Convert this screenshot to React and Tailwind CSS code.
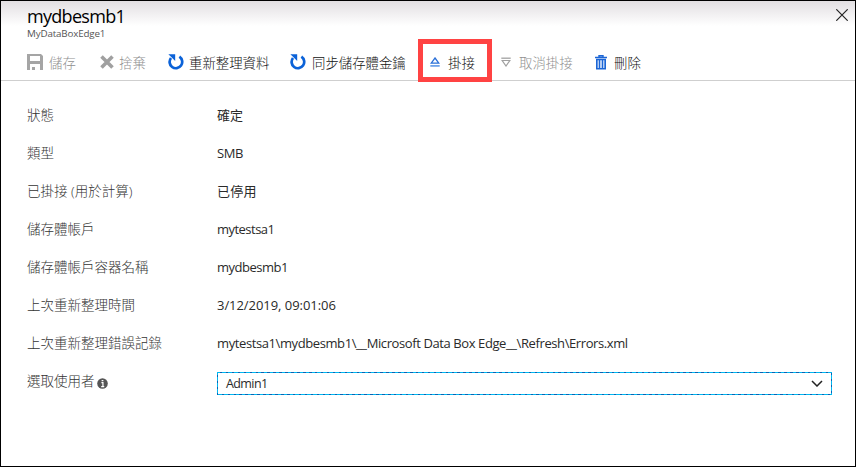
const save = (
  <svg width="16" height="16" viewBox="0 0 16 16" fill="none">
    <path fillRule="evenodd" fill="#a5a5a5" d="M0 0H14L16 2V16H0ZM3 2V7H13V2ZM3 10V16H5V13H8V16H13V10Z" />
  </svg>
);
const discard = (
  <svg width="14" height="14" viewBox="0 0 14 14">
    <path d="M1.5 1.5L12.5 12.5M12.5 1.5L1.5 12.5" stroke="#a0a0a0" strokeWidth="3.6" />
  </svg>
);
const refresh = (
  <svg width="16" height="16" viewBox="0 0 16 16">
    <path d="M11.4 2.7A6.3 6.3 0 1 1 3 4" fill="none" stroke="#0b62d8" strokeWidth="2.7" />
    <path d="M0.4 0.2H7.2V7Z" fill="#0b62d8" />
  </svg>
);
const mount = (
  <svg width="10" height="10" viewBox="0 0 10 10">
    <path d="M5 1L8.8 6.2H1.2Z" fill="none" stroke="#2a70d8" strokeWidth="1.3" />
    <path d="M0.3 8H9.7V9.8H0.3Z" fill="#6fa3ea" />
  </svg>
);
const unmount = (
  <svg width="10" height="10" viewBox="0 0 10 10">
    <path d="M0.3 1.2H9.7" stroke="#a8a8a8" strokeWidth="1.4" />
    <path d="M1.2 3.5H8.8L5 9Z" fill="none" stroke="#a0a0a0" strokeWidth="1.2" />
  </svg>
);
const trash = (
  <svg width="12" height="15" viewBox="0 0 12 15" fill="none" stroke="#1c66d6">
    <path d="M0 2.5H12M4 2V0.7H8V2" strokeWidth="1.4" />
    <path d="M1.8 4.5H10.2V13.8H1.8Z" fill="#cfe0f8" strokeWidth="1.6" />
    <path d="M4.5 5V13M7.5 5V13" strokeWidth="1.3" />
  </svg>
);

const actions = [
  { icon: save, label: "儲存", off: true, pos: "w-[73px]", gap: "w-[22px]" },
  { icon: discard, label: "捨棄", off: true, pos: "w-[68px]", gap: "w-[19px]" },
  { icon: refresh, label: "重新整理資料", pos: "w-[122px]", gap: "w-[21px]" },
  { icon: refresh, label: "同步儲存體金鑰", pos: "w-[140px]", gap: "w-[22px]" },
  { icon: mount, label: "掛接", pos: "w-[71px]", gap: "w-[18px]", marked: true },
  { icon: unmount, label: "取消掛接", off: true, pos: "w-[94px]", gap: "w-[18px]" },
  { icon: trash, label: "刪除", pos: "w-[60px]", gap: "w-[19px]" },
];

const rows = [
  { label: "狀態", value: "確定", track: "tracking-normal" },
  { label: "類型", value: "SMB", track: "tracking-[-0.4px]" },
  { label: "已掛接 (用於計算)", value: "已停用", track: "tracking-[0.3px]" },
  { label: "儲存體帳戶", value: "mytestsa1", track: "tracking-[-0.53px]" },
  { label: "儲存體帳戶容器名稱", value: "mydbesmb1", track: "tracking-[-0.5px]" },
  { label: "上次重新整理時間", value: "3/12/2019, 09:01:06", track: "tracking-[-0.05px]" },
  {
    label: "上次重新整理錯誤記錄",
    value: "mytestsa1\\mydbesmb1\\__Microsoft Data Box Edge__\\Refresh\\Errors.xml",
    track: "tracking-[-0.4px]",
  },
];

export default function App() {
  return (
    <div className="flex h-[467px] w-[856px] flex-col overflow-hidden border border-black bg-white font-['Open_Sans','Noto_Sans_CJK_TC',sans-serif] text-[13px] leading-[18px] text-[#2a2a2a]">
      <header className="flex h-[43px] shrink-0 justify-between bg-linear-to-b from-[#e2dfe2] to-white to-[25px] pl-[26px] pr-[7px]">
        <div>
          <h1 className="mt-[4px] h-[22px] text-[18px] leading-[22px] font-medium tracking-[-0.7px] whitespace-nowrap text-black">mydbesmb1</h1>
          <p className="h-[14px] text-[9.8px] leading-[14px] tracking-[-0.15px] whitespace-nowrap text-[#555]">MyDataBoxEdge1</p>
        </div>
        <svg className="mt-2" width="12" height="12" viewBox="0 0 12 12">
          <path d="M0.3 0.3L11.7 11.7M11.7 0.3L0.3 11.7" stroke="#222" strokeWidth="1.2" />
        </svg>
      </header>
      <nav className="flex h-[37px] shrink-0 border-b border-[#cfcfcf] pl-[26px]">
        {actions.map((a) => (
          <div key={a.label} className={`relative flex h-[36px] shrink-0 items-center whitespace-nowrap ${a.pos} ${a.off ? "text-[#909090]" : "text-[#111]"}`}>
            <span className={`shrink-0 ${a.gap}`}>{a.icon}</span>
            <span className="pt-[2px] text-[13.4px] font-light">{a.label}</span>
            {a.marked && <span className="absolute -top-[5px] -left-[12px] h-[43px] w-[74px] border-5 border-[#ff4343]" />}
          </div>
        ))}
      </nav>
      <main className="flex flex-col pt-[15px] pl-[26px]">
        {rows.map(({ label, value, track }) => (
          <div key={label} className="flex h-[38px] items-center whitespace-nowrap">
            <span className="w-[190px] text-[13.5px] font-light text-[#333]">{label}</span>
            <span className={track}>{value}</span>
          </div>
        ))}
        <div className="flex h-[38px] items-center">
          <span className="flex w-[190px] items-center text-[13.5px] font-light text-[#333]">
            選取使用者
            <svg className="mt-1 ml-[2px]" width="11" height="11" viewBox="0 0 10 10">
              <circle cx="5" cy="5" r="4.8" fill="#555" />
              <path d="M4 4.2H5.4V7.7M3.8 7.8H6.6M4.2 2.4H5.8" stroke="#fff" strokeWidth="1.1" fill="none" />
            </svg>
          </span>
          <div className="mt-[5px] h-[23px] w-[615px] bg-[repeating-linear-gradient(135deg,#00b7f0_0_2.4px,#0a62b4_2.4px_4.2px)] p-px">
            <div className="flex h-full items-center justify-between bg-white pr-2 pl-2">
              <span className="text-[12.5px] tracking-[-0.6px]">Admin1</span>
              <svg width="12" height="7" viewBox="0 0 12 7">
                <path d="M1 1L6 6L11 1" fill="none" stroke="#222" strokeWidth="1.5" />
              </svg>
            </div>
          </div>
        </div>
      </main>
    </div>
  );
}
